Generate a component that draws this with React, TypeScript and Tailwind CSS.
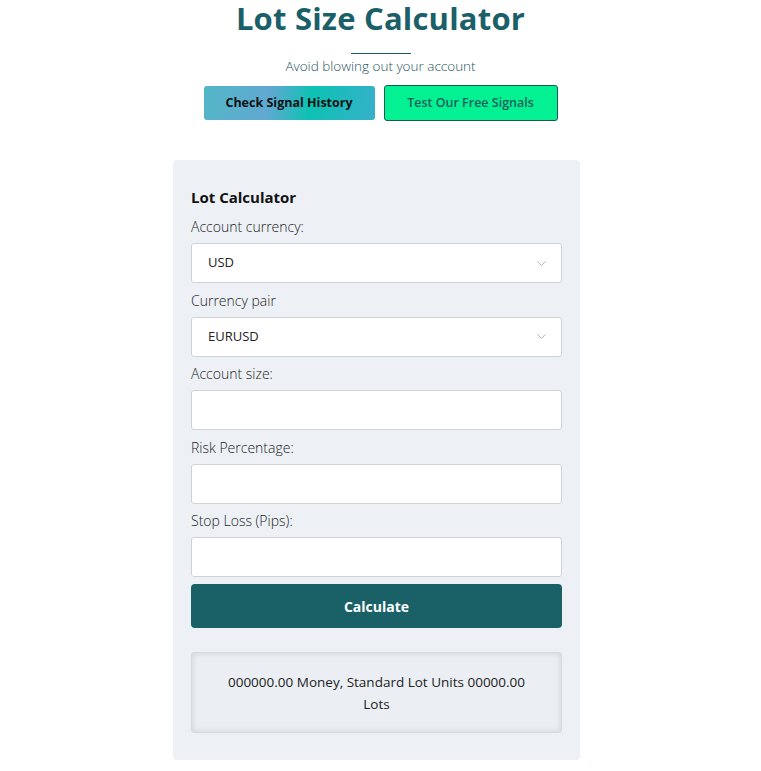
import { ChevronDown } from 'lucide-react'

const font = { fontFamily: '"Open Sans", "Noto Sans", sans-serif' }

function Field({ label, children }: { label: string; children: React.ReactNode }) {
  return (
    <div>
      <label className="block h-[17px] text-[14px] font-light leading-[17px] text-[#222]">{label}</label>
      <div className="mt-[8px]">{children}</div>
    </div>
  )
}

function SelectBox({ value }: { value: string }) {
  return (
    <div className="flex h-[40px] items-center justify-between rounded-[3px] border border-[#cfd3d8] bg-white pl-[16px] pr-[12px]">
      <span className="text-[13px] text-[#222]">{value}</span>
      <ChevronDown className="h-[15px] w-[15px] text-[#a8adb3]" strokeWidth={1.5} />
    </div>
  )
}

function InputBox() {
  return <div className="h-[40px] rounded-[3px] border border-[#cfd3d8] bg-white" />
}

export default function App() {
  return (
    <div className="min-h-[771px] w-full bg-white" style={font}>
      <div className="flex flex-col items-center pt-[3px]">
        <h1 className="text-[31px] font-bold leading-[30px] tracking-[0.2px] text-[#1b5f69]">Lot Size Calculator</h1>
        <div className="mt-[20px] h-[1px] w-[60px] bg-[#1b5f69]" />
        <p className="mt-[4px] text-[13.5px] font-light leading-[17px] text-[#1f5660]">Avoid blowing out your account</p>
        <div className="mt-[10px] flex items-center gap-[9px]">
          <button className="h-[34px] w-[171px] rounded-[3px] bg-[linear-gradient(100deg,#53b7c6_0%,#61a8d2_38%,#0dc2b2_62%,#36b0ca_100%)] text-[12.5px] font-bold text-[#111]">
            Check Signal History
          </button>
          <button className="h-[36px] w-[174px] rounded-[3px] border border-[#155e4f] bg-[#03f193] text-[12.5px] font-semibold text-[#1b5f5c]">
            Test Our Free Signals
          </button>
        </div>

        <div className="mr-[8px] mt-[39px] w-[407px] rounded-[4px] bg-[#edf1f6] px-[18px] pb-[27px] pt-[28px]">
          <h2 className="text-[15px] font-bold leading-[18px] text-[#111]">Lot Calculator</h2>
          <div className="mt-[12px] flex flex-col gap-[8.5px]">
            <Field label="Account currency:">
              <SelectBox value="USD" />
            </Field>
            <Field label="Currency pair">
              <SelectBox value="EURUSD" />
            </Field>
            <Field label="Account size:">
              <InputBox />
            </Field>
            <Field label="Risk Percentage:">
              <InputBox />
            </Field>
            <Field label="Stop Loss (Pips):">
              <InputBox />
            </Field>
          </div>
          <button className="mt-[7px] h-[44px] w-full rounded-[4px] bg-[#196067] text-[14px] font-bold text-white">
            Calculate
          </button>
          <div className="mt-[24px] flex h-[81px] items-center justify-center rounded-[3px] border border-[#d5d9de] bg-[#ebeff4] px-[20px] text-center text-[13.5px] leading-[22px] text-[#222] shadow-[inset_0_0_6px_rgba(0,0,0,0.12)]">
            <p>
              000000.00 Money, Standard Lot Units 00000.00
              <br />
              Lots
            </p>
          </div>
        </div>
      </div>
    </div>
  )
}
